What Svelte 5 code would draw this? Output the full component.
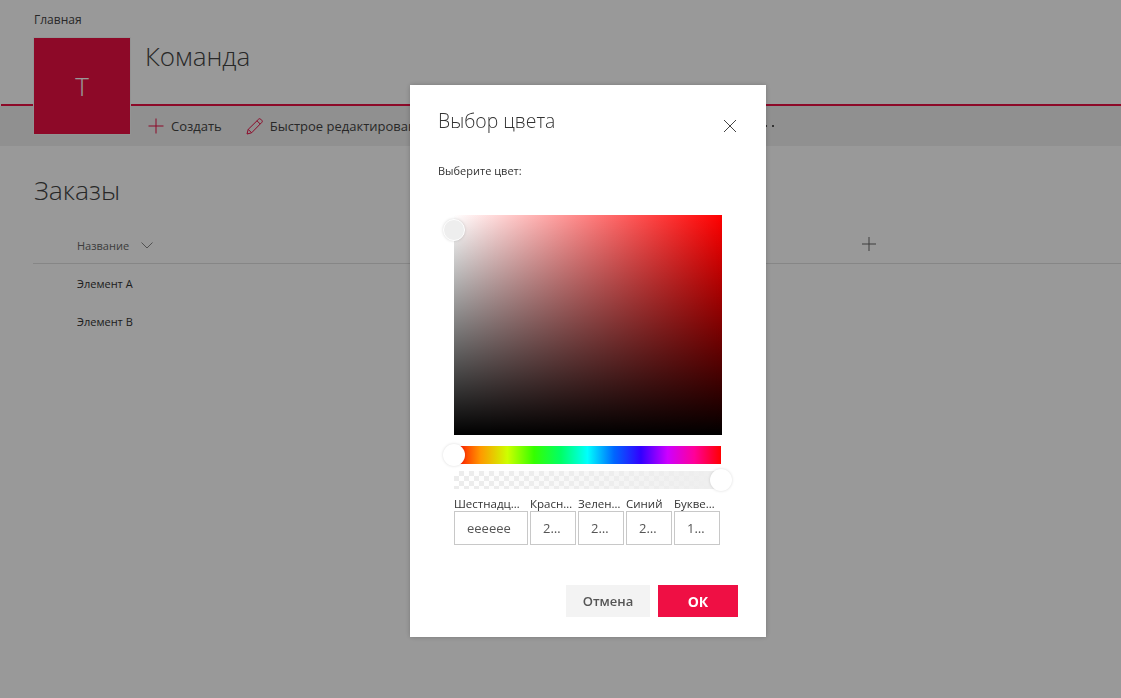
<script>
	const fields = [
		{ label: 'Шестнадцатеричный', value: 'eeeeee', wide: true },
		{ label: 'Красный', value: '238' },
		{ label: 'Зеленый', value: '238' },
		{ label: 'Синий', value: '238' },
		{ label: 'Буквенный', value: '100' }
	];
	const items = ['Элемент A', 'Элемент B'];
</script>

<div class="page">
	<header>
		<nav>Главная</nav>
		<div class="site">
			<div class="logo">T</div>
			<h1>Команда</h1>
		</div>
	</header>

	<div class="commands">
		<button class="cmd">
			<svg width="16" height="16" viewBox="0 0 16 16"><path d="M8 .5v15M.5 8h15" stroke="#eb0f44" fill="none" /></svg>
			Создать
		</button>
		<button class="cmd edit">
			<svg width="17" height="17" viewBox="0 0 17 17"><path d="M1 16l1.2-4.6L12.6 1.2a1.5 1.5 0 0 1 2.1 0l1.1 1.1a1.5 1.5 0 0 1 0 2.1L5.6 14.8zM2.2 11.4l3.4 3.4M11 2.8l3.2 3.2" stroke="#eb0f44" fill="none" /></svg>
			Быстрое редактирование
		</button>
		<span class="more">
			<i></i><i></i><i></i>
		</span>
	</div>

	<main>
		<h2>Заказы</h2>
		<div class="list-head">
			<span class="col">Название</span>
			<svg class="chev" width="12" height="7" viewBox="0 0 12 7"><path d="M.5.5L6 6 11.5.5" stroke="#888" fill="none" /></svg>
			<svg class="add" width="14" height="14" viewBox="0 0 14 14"><path d="M7 0v14M0 7h14" stroke="#666" fill="none" /></svg>
		</div>
		{#each items as item}
			<div class="row">{item}</div>
		{/each}
	</main>
</div>

<div class="overlay"></div>

<div class="modal">
	<div class="modal-head">
		<h3>Выбор цвета</h3>
		<svg class="close" width="14" height="14" viewBox="0 0 14 14"><path d="M1 1l12 12M13 1L1 13" stroke="#444" fill="none" /></svg>
	</div>
	<p class="hint">Выберите цвет:</p>

	<div class="picker">
		<div class="square">
			<span class="thumb sv"></span>
		</div>
		<div class="slider hue">
			<span class="thumb start"></span>
		</div>
		<div class="slider alpha">
			<span class="thumb end"></span>
		</div>
		<div class="fields">
			{#each fields as f}
				<label class:wide={f.wide}>
					<span>{f.label}</span>
					<input value={f.value} readonly />
				</label>
			{/each}
		</div>
	</div>

	<div class="actions">
		<button class="cancel">Отмена</button>
		<button class="ok">ОК</button>
	</div>
</div>

<style>
	:global(html), :global(body) {
		margin: 0;
		height: 100%;
		overflow: hidden;
		background: #fff;
	}

	.page {
		font-family: "Open Sans", "Noto Sans", sans-serif;
		color: #333;
	}

	header {
		height: 104px;
		margin-left: 1px;
		padding: 0 0 0 33px;
		border-bottom: 2px solid #eb0f44;
		box-sizing: content-box;
	}

	nav {
		font-size: 12px;
		line-height: 16px;
		padding-top: 12px;
		height: 27px;
		box-sizing: border-box;
		color: #444;
	}

	.site {
		display: flex;
		align-items: flex-start;
		gap: 15px;
	}

	.logo {
		width: 96px;
		height: 96px;
		flex: none;
		background: #eb0f44;
		outline: 1px solid #f5f5f5;
		color: #fff;
		font-size: 26px;
		font-weight: 300;
		display: flex;
		align-items: center;
		justify-content: center;
		position: relative;
		z-index: 1;
		margin-top: 11px;
		margin-bottom: -30px;
	}

	h1 {
		margin: 0;
		font-size: 26px;
		font-weight: 300;
		line-height: 36px;
		padding-top: 11px;
		color: #444;
	}

	.commands {
		height: 40px;
		background: #f0f0f0;
		display: flex;
		align-items: center;
		padding-left: 148px;
		color: #444;
	}

	.cmd {
		display: flex;
		align-items: center;
		gap: 7px;
		border: 0;
		padding: 0;
		background: none;
		font: inherit;
		font-size: 13px;
		color: #444;
		white-space: nowrap;
	}

	.edit {
		margin-left: 24px;
	}

	.more {
		display: flex;
		gap: 5px;
		margin-left: 326px;
	}

	.more i {
		width: 2px;
		height: 2px;
		background: #555;
	}

	main {
		padding: 26px 0 0 33px;
	}

	h2 {
		margin: 0;
		font-size: 26.5px;
		font-weight: 300;
		line-height: 36px;
		padding-left: 1px;
		color: #444;
	}

	.list-head {
		display: flex;
		align-items: center;
		height: 36px;
		margin-top: 19px;
		padding-left: 44px;
		border-bottom: 1px solid #e0e0e0;
		font-size: 11px;
		color: #666;
	}

	.chev {
		margin-left: 12px;
	}

	.add {
		margin-left: 709px;
		margin-top: -3px;
	}

	.row {
		font-size: 11px;
		line-height: 38px;
		padding-left: 44px;
		position: relative;
		top: 1px;
		color: #333;
	}

	.overlay {
		position: fixed;
		inset: 0;
		background: rgba(0, 0, 0, 0.4);
		z-index: 2;
	}

	.modal {
		position: fixed;
		left: 410px;
		top: 85px;
		width: 356px;
		height: 552px;
		box-sizing: border-box;
		z-index: 3;
		background: #fff;
		box-shadow: 0 0 5px rgba(0, 0, 0, 0.22);
		font-family: "Open Sans", "Noto Sans", sans-serif;
		color: #333;
		padding: 0 28px;
		display: flex;
		flex-direction: column;
	}

	.modal-head {
		display: flex;
		align-items: flex-start;
		justify-content: space-between;
		padding-top: 20px;
	}

	h3 {
		margin: 0;
		font-size: 19.4px;
		font-weight: 300;
		line-height: 32px;
	}

	.close {
		margin-top: 14px;
		margin-right: 1px;
	}

	.hint {
		margin: 0;
		padding-top: 26px;
		font-size: 11px;
		line-height: 16px;
	}

	.picker {
		margin: 36px 0 0 16px;
		width: 268px;
	}

	.square {
		height: 220px;
		position: relative;
		background:
			linear-gradient(to top, #000, rgba(0, 0, 0, 0)),
			linear-gradient(to right, #fff, #f00);
	}

	.slider {
		position: relative;
		height: 18px;
		width: 267px;
	}

	.hue {
		margin-top: 11px;
		background: linear-gradient(to right, #f00, #f90 10%, #cdff00 20%, #35ff00 30%, #0f6 40%, #00fffd 50%, #06f 60%, #3200ff 70%, #cd00ff 80%, #f09 90%, #f00);
	}

	.alpha {
		margin-top: 7px;
		background:
			linear-gradient(to right, rgba(238, 238, 238, 0), #eee),
			repeating-conic-gradient(#ececec 0 25%, #fff 0 50%) 0 0 / 10px 10px;
	}

	.thumb {
		position: absolute;
		width: 22px;
		height: 22px;
		border-radius: 50%;
		background: #fff;
		box-shadow: 0 0 3px rgba(0, 0, 0, 0.15);
		transform: translate(-50%, -50%);
		top: 50%;
	}

	.start {
		left: 0;
	}

	.end {
		left: 100%;
	}

	.sv {
		left: 0;
		top: 15px;
		background: #eee;
		border: 1px solid #fff;
		box-sizing: border-box;
	}

	.fields {
		display: flex;
		gap: 2px;
		margin-top: 7px;
	}

	label {
		width: 46px;
		display: block;
	}

	label.wide {
		width: 74px;
	}

	label.wide span {
		padding-right: 8px;
	}

	label span {
		display: block;
		font-size: 11.5px;
		line-height: 16px;
		margin-bottom: -1px;
		overflow: hidden;
		white-space: nowrap;
		text-overflow: ellipsis;
		color: #333;
	}

	input {
		display: block;
		width: 100%;
		height: 34px;
		box-sizing: border-box;
		border: 1px solid #c8c8c8;
		border-radius: 0;
		padding: 0 12px;
		font: inherit;
		font-size: 13px;
		color: #555;
		outline: none;
		text-overflow: ellipsis;
	}

	.actions {
		display: flex;
		justify-content: flex-end;
		gap: 8px;
		margin-top: 40px;
	}

	.actions button {
		height: 32px;
		border: 0;
		font: inherit;
		font-size: 13px;
		font-weight: 600;
		padding: 0;
	}

	.cancel {
		width: 84px;
		background: #f3f3f3;
		color: #555;
	}

	.actions .ok {
		width: 80px;
		background: #ef0f44;
		color: #fff;
		font-size: 14px;
		font-weight: 700;
	}
</style>
